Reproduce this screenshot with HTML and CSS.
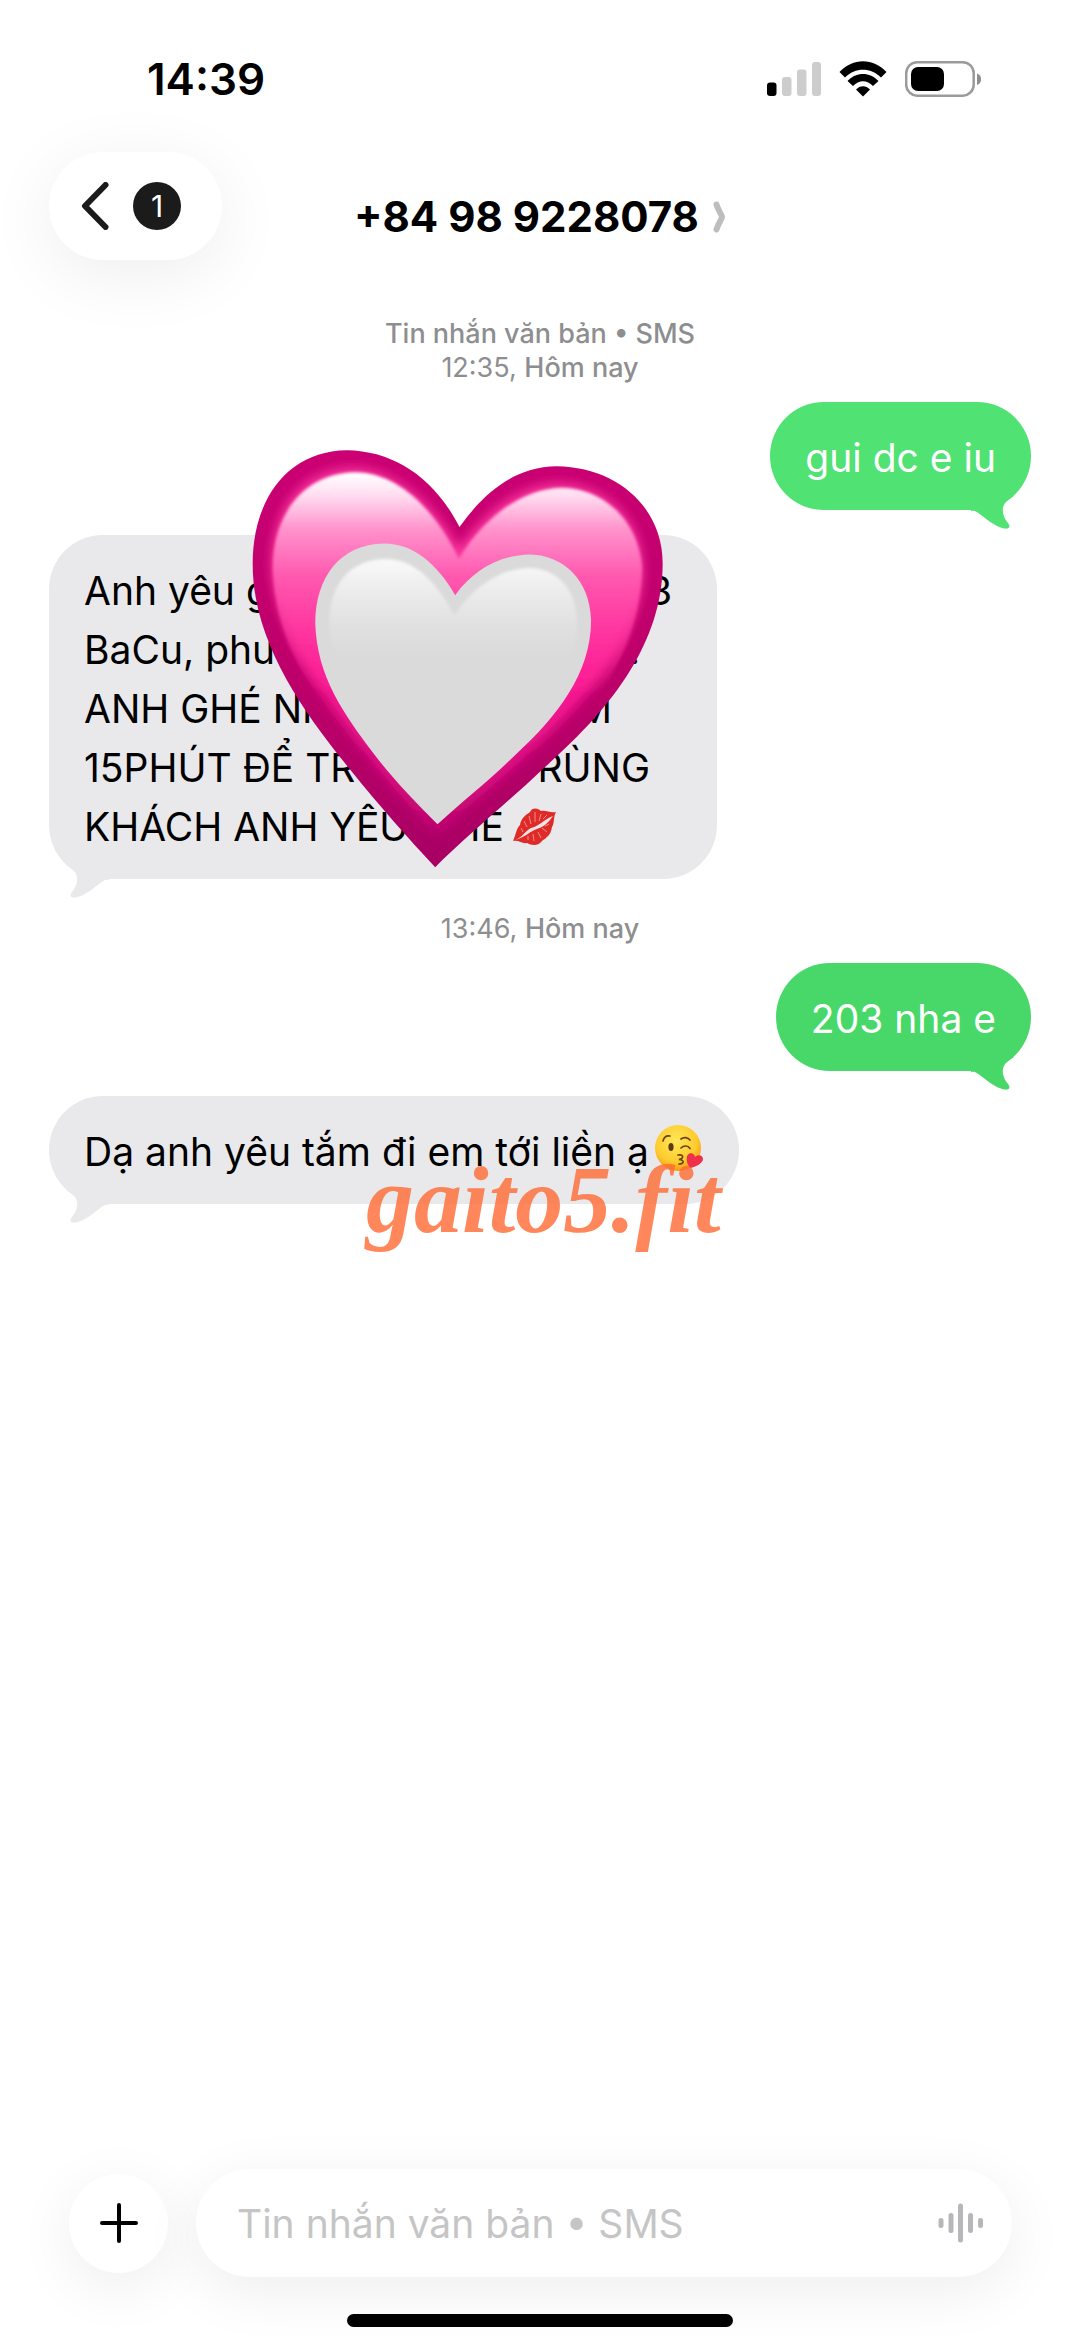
FILE: index.html
```
<!DOCTYPE html>
<html lang="vi">
<head>
    <meta charset="utf-8">
    <meta name="viewport" content="width=device-width, initial-scale=1">
    <title>+84 98 9228078</title>
    <link rel="stylesheet" href="styles.css">
</head>
<body>
    <svg class="defs" aria-hidden="true">
        <symbol id="tail" viewBox="0 0 60 40">
            <path d="M0 0V22C4 21 6 23 10 26C20 34 28 39 34 39.6C38 40 40 38 37 34C31 27 30 18 35 13C37 11 39 9 43 7L24 0Z" fill="currentColor"/>
        </symbol>
    </svg>

    <div class="status-bar">
        <span class="time">14:39</span>
        <div class="status-icons">
            <svg width="54" height="36" viewBox="0 0 54 36">
                <rect x="0" y="21.500" width="9.5" height="13.500" rx="3"/>
                <rect x="15" y="16" width="9.5" height="19" rx="3" fill="#cdcdcd"/>
                <rect x="30" y="8.500" width="9.500" height="26.500" rx="3" fill="#cdcdcd"/>
                <rect x="45" y="1" width="9" height="34" rx="3" fill="#cdcdcd"/>
            </svg>
            <svg width="48" height="36" viewBox="0 0 48 36">
                <path d="M0.500 11C14 -3.500 34 -3.500 47.500 11L42 16.500C32 6 16 6 6 16.500Z"/>
                <path d="M8.500 20C17 10.500 31 10.500 39.500 20L34 25C28 18.500 20 18.500 14 25Z"/>
                <path d="M17 28.500C21 24 27 24 31 28.500L24 35.500Z"/>
            </svg>
            <svg width="76" height="36" viewBox="0 0 76 36">
                <rect x="1.200" y="1.200" width="67.500" height="33.500" rx="11" fill="none" stroke="#9b9b9b" stroke-width="2.500"/>
                <rect x="6" y="6" width="33" height="24" rx="7"/>
                <path d="M72 12.500C77.500 14.500 77.500 22 72 24Z" fill="#8e8e8e"/>
            </svg>
        </div>
    </div>

    <header class="header">
        <button class="back" type="button" aria-label="1">
            <svg width="28" height="48" viewBox="0 0 28 48">
                <path d="M24.500 3L4 24L24.500 45" fill="none" stroke="#1b1b1b" stroke-width="6" stroke-linecap="round" stroke-linejoin="round"/>
            </svg>
            <span class="badge">1</span>
        </button>
        <h1 class="contact">
            +84 98 9228078
            <svg width="13" height="32" viewBox="0 0 13 32">
                <path d="M3.500 3.500C5 9 9 14 9 16C9 18 5 23 3.500 28.500" fill="none" stroke="#bdbdbd" stroke-width="6" stroke-linecap="round"/>
            </svg>
        </h1>
    </header>

    <main class="thread">
        <p class="stamp"><b>Tin nhắn văn bản • SMS</b><br>12:35, <b>Hôm nay</b></p>

        <div class="bubble sent light">
            gui dc e iu
            <svg class="tail"><use href="#tail"/></svg>
        </div>

        <div class="bubble received long">
            <div class="line first"><span>Anh yêu g</span><span>3</span></div>
            <div class="line second"><span>BaCu, phu</span><span>.</span></div>
            <div class="line third"><span>ANH GHÉ NH</span><span>M</span></div>
            <div class="line fourth"><span>15PHÚT ĐỂ TR</span><span>RÙNG</span></div>
            <div class="line fifth">
                <span>KHÁCH ANH YÊU</span>
                <span class="ending">HE
                    <svg class="kiss" width="44" height="40" viewBox="0 0 44 40">
                        <path d="M1 34C4 28 4 22 8 18C9 11 14 8 18 5C20 0 26 1 29 4C34 3 38 6 44 5C41 10 43 15 40 20C39 28 34 31 30 34C25 40 19 38 15 36C10 37 7 33 1 34Z" fill="#df2a27"/>
                        <path d="M3 33C11 30 13 24 19 21C26 20 31 13 41 9C35 18 30 20 25 22C18 24 14 30 3 33Z" fill="#f3e3e3"/>
                        <path d="M12 14L15 20M17 9L19 17M23 5L23 15M29 7L27 14M35 8L31 12M9 21L11 25M37 17L33 19M35 25L30 21M29 31L26 25M22 34L21 27M16 33L16 29" fill="none" stroke="#ee8f8c" stroke-width="1"/>
                    </svg>
                </span>
            </div>
            <svg class="heart" width="417" height="423" viewBox="90 50 1250 1270">
                <defs>
                    <linearGradient id="rim" x1="0" y1="0" x2="0" y2="1">
                        <stop offset="0" stop-color="#cb0073"/>
                        <stop offset="0.6" stop-color="#bb0069"/>
                        <stop offset="1" stop-color="#a80064"/>
                    </linearGradient>
                    <linearGradient id="body" gradientUnits="userSpaceOnUse" x1="0" y1="120" x2="0" y2="1250">
                        <stop offset="0" stop-color="#f52f9a"/>
                        <stop offset="0.3" stop-color="#ff389f"/>
                        <stop offset="0.55" stop-color="#fb1b94"/>
                        <stop offset="0.8" stop-color="#e20e86"/>
                        <stop offset="1" stop-color="#b50069"/>
                    </linearGradient>
                    <linearGradient id="gloss" gradientUnits="userSpaceOnUse" x1="0" y1="130" x2="0" y2="800">
                        <stop offset="0" stop-color="#fff"/>
                        <stop offset="0.1" stop-color="#ffdcf0"/>
                        <stop offset="0.25" stop-color="#ff92cc"/>
                        <stop offset="0.45" stop-color="#ff5bb0"/>
                        <stop offset="0.7" stop-color="#ff3ba2" stop-opacity="0.7"/>
                        <stop offset="1" stop-color="#ff2898" stop-opacity="0"/>
                    </linearGradient>
                    <linearGradient id="pearl" gradientUnits="userSpaceOnUse" x1="0" y1="385" x2="0" y2="680">
                        <stop offset="0" stop-color="#fafafa"/>
                        <stop offset="0.3" stop-color="#ededed"/>
                        <stop offset="0.65" stop-color="#e1e1e1"/>
                        <stop offset="1" stop-color="#dadada"/>
                    </linearGradient>
                    <filter id="soft" x="-10%" y="-10%" width="120%" height="120%"><feGaussianBlur stdDeviation="16"/></filter>
                    <filter id="edge" x="-10%" y="-10%" width="120%" height="120%"><feGaussianBlur stdDeviation="4"/></filter>
                </defs>
                <path d="M718 290C640 140 520 62 380 60C200 62 97 210 97 400C97 630 240 835 395 1025C480 1130 560 1220 645 1312C740 1215 860 1120 970 1015C1170 840 1328 640 1328 400C1328 230 1190 110 1010 108C880 110 790 190 718 290Z" fill="url(#rim)"/>
                <path d="M716 355C640 215 520 110 395 110C240 115 156 235 154 400C161 610 310 810 450 985C520 1075 585 1150 650 1215C740 1130 850 1045 935 960C1110 800 1268 620 1268 410C1263 255 1150 160 1015 157C890 162 790 250 716 355Z" fill="url(#body)" filter="url(#soft)"/>
                <path d="M716 385C640 230 530 128 405 126C250 130 160 250 157 410C162 560 215 690 300 800L1130 800C1215 690 1265 540 1266 410C1255 270 1150 174 1025 172C900 176 790 265 716 385Z" fill="url(#gloss)" filter="url(#edge)"/>
                <path d="M705 495C650 400 580 340 490 340C360 343 285 440 285 580C290 740 370 850 460 970C520 1050 590 1120 652 1183C730 1110 810 1050 890 970C1010 860 1113 730 1113 570C1110 450 1030 375 930 373C835 375 760 420 705 495Z" fill="#dadada"/>
                <path d="M703 556C650 460 590 387 495 386C390 388 325 460 327 590C335 690 400 780 480 890L900 890C1000 790 1072 690 1072 570C1065 470 1010 415 925 413C835 415 750 480 703 556Z" fill="url(#pearl)" filter="url(#edge)"/>
            </svg>
            <svg class="tail"><use href="#tail"/></svg>
        </div>

        <p class="stamp">13:46, <b>Hôm nay</b></p>

        <div class="bubble sent">
            203 nha e
            <svg class="tail"><use href="#tail"/></svg>
        </div>

        <div class="bubble received">
            Dạ anh yêu tắm đi em tới liền ạ<svg class="face" width="50" height="50" viewBox="0 0 50 50">
                <defs>
                    <radialGradient id="skin" cx="0.45" cy="0.35" r="0.65">
                        <stop offset="0" stop-color="#ffe75a"/>
                        <stop offset="0.7" stop-color="#fecb2e"/>
                        <stop offset="1" stop-color="#f39a16"/>
                    </radialGradient>
                </defs>
                <circle cx="24" cy="24" r="23" fill="url(#skin)"/>
                <ellipse cx="17" cy="23" rx="2.600" ry="4" fill="#5f3a0c"/>
                <path d="M9 17C10 13 13 11.500 16 12M27 15C30 12.500 34 13.500 36 16M27 24C30 21 34 21.500 36 24.500M24 31C29 30 31 34 25 35.500C31 36 30 40 25 40" fill="none" stroke="#6b430f" stroke-width="1.700" stroke-linecap="round"/>
                <path d="M36 44C32 38 32 33 34 30.500C37 27.500 41 30 41 33C44 30 49 31 49 35C49 39 42 43 36 44Z" fill="#f0304a"/>
            </svg>
            <svg class="tail"><use href="#tail"/></svg>
            <span class="watermark">gaito5.fit</span>
        </div>
    </main>

    <form class="composer">
        <button class="add" type="button" aria-label="+">
            <svg width="38" height="40" viewBox="0 0 38 40">
                <path d="M19 2V38M2 20H36" fill="none" stroke="#000" stroke-width="4" stroke-linecap="round"/>
            </svg>
        </button>
        <div class="field">
            <input type="text" placeholder="Tin nhắn văn bản • SMS" aria-label="Tin nhắn văn bản • SMS">
            <button class="voice" type="button" aria-label="Audio">
                <svg width="46" height="42" viewBox="0 0 46 42">
                    <path d="M3 18.500V23.500M13 13.500V28.500M22.500 4V38M32.500 13.500V28.500M42.500 18.500V23.500" fill="none" stroke="#b7b7bb" stroke-width="5" stroke-linecap="round"/>
                </svg>
            </button>
        </div>
    </form>
    <div class="home-indicator"></div>
</body>
</html>
```
FILE: styles.css
```
* {
    box-sizing: border-box;
}

body {
    display: flex;
    flex-direction: column;
    min-height: 100vh;
    margin: 0;
    background-color: #fff;
    color: #000;
    font-family: Inter, "Liberation Sans", sans-serif;
    font-size: 39px;
}

button,
input {
    border: 0;
    padding: 0;
    background-color: #fff;
    color: inherit;
    font: inherit;
}

svg {
    flex: none;
}

.defs {
    position: absolute;
    width: 0;
    height: 0;
}

/* Status bar */
.status-bar {
    display: flex;
    justify-content: space-between;
    align-items: center;
    padding: 52px 99px 46px 147px;
    line-height: 54px;
}

.time {
    font-size: 44px;
    font-weight: 600;
}

.status-icons {
    display: flex;
    align-items: center;
    gap: 18px;
}

/* Header */
.header {
    display: grid;
    grid-template-columns: 1fr auto 1fr;
    align-items: end;
    padding: 0 49px;
}

.back {
    display: flex;
    align-items: center;
    justify-self: start;
    gap: 24px;
    height: 108px;
    padding: 0 41px 0 32px;
    border-radius: 54px;
    box-shadow: 0 14px 70px rgba(0, 0, 0, 0.07);
}

.badge {
    width: 48px;
    border-radius: 50%;
    background-color: #1b1b1b;
    color: #fff;
    font-size: 30px;
    line-height: 48px;
    text-align: center;
}

.contact {
    display: flex;
    align-items: center;
    gap: 14px;
    margin: 0;
    font-size: 42px;
    font-weight: 700;
    line-height: 86px;
}

/* Messages */
.thread {
    display: flex;
    flex: 1;
    flex-direction: column;
    align-items: flex-start;
    padding: 24px 49px 48px;
}

.stamp {
    align-self: center;
    margin: 33px 0 17px;
    color: #8e8e90;
    font-size: 27px;
    line-height: 34px;
    text-align: center;
}

.stamp b {
    font-weight: 500;
}

.bubble {
    position: relative;
    padding: 26px 35px 23px;
    border-radius: 54px;
    line-height: 59px;
}

.bubble + .bubble {
    margin-top: 25px;
}

.sent {
    align-self: flex-end;
    background-color: #48d869;
    color: #fff;
}

.sent.light {
    background-color: #50e273;
}

.received {
    background-color: #e9e9eb;
}

.tail {
    position: absolute;
    right: 0;
    bottom: -19px;
    width: 60px;
    height: 40px;
    color: #48d869;
}

.light .tail {
    color: #50e273;
}

.received .tail {
    right: auto;
    left: 0;
    color: #e9e9eb;
    transform: scaleX(-1);
}

.long {
    width: 68%;
}

.line {
    display: flex;
    justify-content: space-between;
    white-space: nowrap;
}

.first {
    width: 588px;
}

.second {
    width: 556px;
}

.third {
    width: 528px;
}

.fourth {
    width: 566px;
}

.fifth {
    width: 472px;
}

.ending {
    display: flex;
    align-items: center;
    gap: 8px;
}

.heart {
    position: absolute;
    top: -88px;
    left: 201px;
}

.face {
    margin-left: 5px;
    vertical-align: -8px;
}

.watermark {
    position: absolute;
    top: 54px;
    left: 317px;
    color: #ff6a33;
    font-family: "Liberation Serif", serif;
    font-size: 96px;
    font-style: italic;
    font-weight: 700;
    line-height: 100px;
    opacity: 0.8;
}

/* Composer */
.composer {
    display: flex;
    align-items: center;
    gap: 28px;
    padding: 0 68px 37px 69px;
}

.add {
    display: flex;
    flex: none;
    align-items: center;
    justify-content: center;
    width: 99px;
    height: 99px;
    border-radius: 50%;
    box-shadow: 0 14px 60px rgba(0, 0, 0, 0.07);
}

.field {
    display: flex;
    flex: 1;
    align-items: center;
    height: 108px;
    padding: 0 28px 0 41px;
    border-radius: 54px;
    background-color: #fff;
    box-shadow: 0 14px 60px rgba(0, 0, 0, 0.07);
}

.field input {
    flex: 1;
    min-width: 0;
    outline: none;
}

.field input::placeholder {
    color: #c5c5c5;
    opacity: 1;
}

.voice {
    display: flex;
}

.home-indicator {
    align-self: center;
    width: 386px;
    height: 13px;
    margin-bottom: 20px;
    border-radius: 7px;
    background-color: #000;
    z-index: 1;
}
```
